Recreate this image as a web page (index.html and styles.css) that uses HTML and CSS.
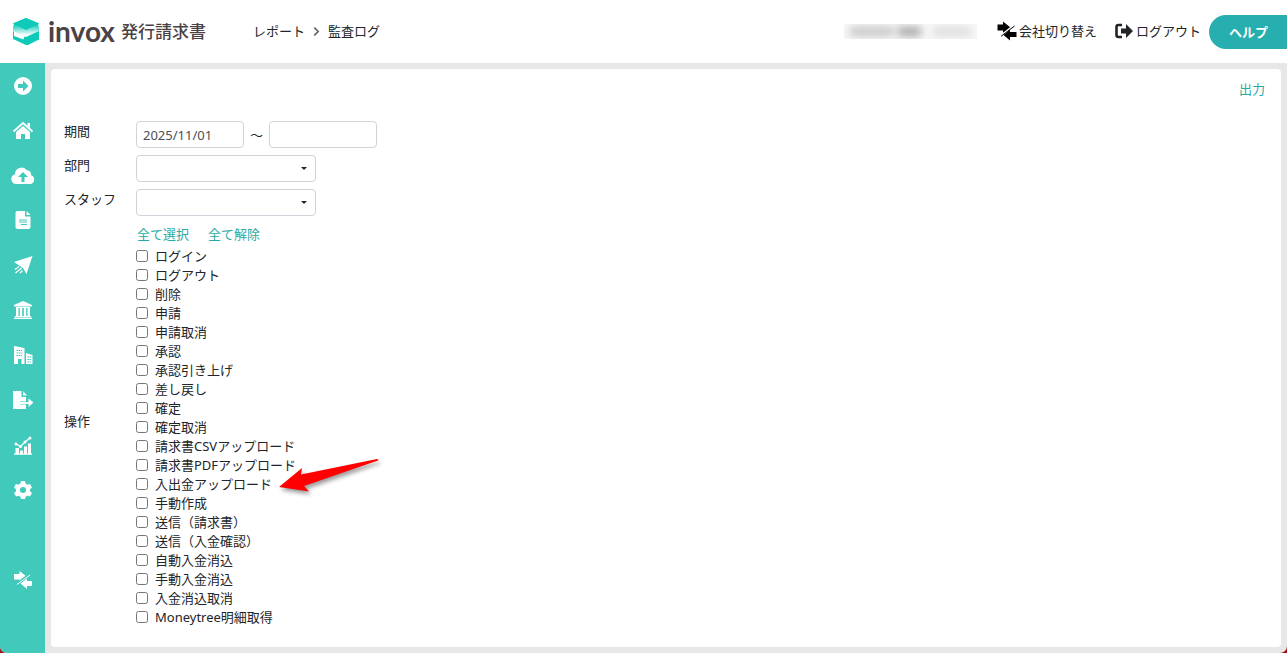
FILE: index.html
```html
<!DOCTYPE html>
<html lang="ja">
<head>
<meta charset="utf-8">
<meta name="viewport" content="width=device-width, initial-scale=1">
<title>invox 発行請求書 - 監査ログ</title>
<link rel="stylesheet" href="styles.css">
</head>
<body>
<div class="app">
  <header class="header">
    <a class="logo" href="#">
      <svg class="logo-mark" viewBox="0 0 28 28" aria-hidden="true">
        <defs><linearGradient id="fade" x1="0" y1="0" x2="0" y2="1"><stop offset="0.35" stop-color="#0fcab8"/><stop offset="0.9" stop-color="#0fcab8" stop-opacity="0"/></linearGradient></defs>
        <path d="M14 1l13 5.500-1 1.500 1 2v4l-13 6-13-6v-4l1-2-1-1.500z" fill="url(#fade)"/>
        <path d="M14 1l13 5.500L14 13 1 6.500z" fill="#0fcab8"/>
        <path d="M1 14l1 1v4l9.500 3.500 1-3 1.500.5 13-6v8.500L16 28h-2L1 22z" fill="#0fcab8"/>
      </svg>
      <span class="logo-name">invox</span>
      <span class="logo-sub">発行請求書</span>
    </a>
    <nav class="crumbs" aria-label="パンくず">
      <a href="#">レポート</a>
      <svg class="crumb-arrow" viewBox="0 0 6 8" aria-hidden="true"><path d="M1 0.500L4.500 4 1 7.500" fill="none" stroke="#666" stroke-width="1.500"/></svg>
      <span>監査ログ</span>
    </nav>
    <div class="account" aria-hidden="true"><i class="smear smear-a"></i><i class="smear smear-b"></i><i class="smear smear-c"></i></div>
    <a class="tool" href="#">
      <svg class="tool-icon" viewBox="0 0 20 20" aria-hidden="true"><path d="M0.500 3.500h5.500V0.500l7.500 6-1 1.500-5 4-1.500.5V9.500H0.500zM19.500 11v5h-6.500v3.500L6.500 14l1.500-1.500L13 8.500V11z"/><path d="M3.500 15L17.500 4" stroke="#fff" stroke-width="2.200"/><path d="M4 15.300L17.500 5" stroke="#000" stroke-width="1"/></svg>
      <span>会社切り替え</span>
    </a>
    <a class="tool tool-logout" href="#">
      <svg class="tool-icon" viewBox="0 0 20 20" aria-hidden="true"><path d="M8 4H4.500Q2.500 4 2.500 6v8q0 2 2 2H8" fill="none" stroke="#212529" stroke-width="2.600"/><path d="M7 7.500h5V3l7 7-7 7v-4.500H7z" fill="#212529"/></svg>
      <span>ログアウト</span>
    </a>
    <button class="help" type="button">ヘルプ</button>
  </header>
  <div class="body">
    <nav class="side" aria-label="メニュー">
      <a href="#" aria-label="開く"><svg viewBox="0 0 22 22"><path fill-rule="evenodd" d="M11 2a9 9 0 100 18 9 9 0 000-18zM6 9h5V5.500l5.500 5.500-5.500 5.500V13H6z"/></svg></a>
      <a href="#" aria-label="ホーム"><svg viewBox="0 0 22 22"><path d="M11 6l7 6V19h-5v-5H9v5H4v-7z"/><path d="M1.500 11.500L11 3l9.500 8.500" fill="none" stroke="#fff" stroke-width="1.800"/><path d="M15.500 3H18v5l-2.500-2z"/></svg></a>
      <a href="#" aria-label="アップロード"><svg class="wide" viewBox="0 0 24 22"><path fill-rule="evenodd" d="M5.500 19a5 5 0 01-1.500-9.800A6.500 6.500 0 0115.500 5a4.500 4.500 0 014.500 5.200A4.500 4.500 0 0119 19zM10.500 17h3v-5H17l-5-5-5 5h3.500z"/></svg></a>
      <a href="#" aria-label="請求書"><svg viewBox="0 0 22 22"><path d="M5.500 1H13v5.500h5.500V17q0 2-2 2h-11q-2 0-2-2V3q0-2 2-2zM14.500 1l4 4h-4z"/><path d="M7 10h8M7 12h8M9 14.500h6" stroke="#41c9bb" stroke-width="1"/></svg></a>
      <a href="#" aria-label="送信"><svg viewBox="0 0 22 22"><path d="M20.500 1L14.500 19l-3.500-6L2 7z"/><path d="M3 14.500l4-3M3.500 18l6-5M8 18l2.500-2.500" fill="none" stroke="#fff" stroke-width="1.300"/></svg></a>
      <a href="#" aria-label="銀行"><svg viewBox="0 0 22 22"><path d="M11 1l9 4v1.500H2V5zM4 7h14v1H4zM4 8h2.500v8H4zM7.800 8h2.400v8H7.800zM11.800 8h2.400v8h-2.400zM15.500 8H18v8h-2.500zM3 16h16v1H3zM2 17.500h18V19H2z"/></svg></a>
      <a href="#" aria-label="会社"><svg viewBox="0 0 22 22"><path d="M2 1l10.500 2v16H9.500v-5H6v5H2zM14 8l6.500 2v9H14z"/><path d="M4.500 5.500h6M4.500 8h6M4.500 10.500h6M15.500 12h3.500M15.500 14.500h3.500M15.500 17h3.500" stroke="#41c9bb" stroke-width="1" stroke-dasharray="1.500 .6"/></svg></a>
      <a href="#" aria-label="出力"><svg viewBox="0 0 22 22"><path d="M1 1h8.500v6H14v4.500H8v3h6V19H1zM11 1l4 4.500h-4zM8 12h8.500V8.500l5 4-5 4.500v-3H8z"/></svg></a>
      <a href="#" aria-label="レポート"><svg viewBox="0 0 22 22"><path d="M3.500 13H7v6H3.500zM8 15.500h3V19H8zM12 11.500h3V19h-3zM16 8.500h3V19h-3zM2 18.500h18v1.200H2z"/><path d="M4 9l4.500 2.500L13 7l5-4" fill="none" stroke="#fff" stroke-width="1.300"/><circle cx="4" cy="9" r="1.500"/><circle cx="8.500" cy="11.500" r="1.500"/><circle cx="13" cy="7" r="1.500"/><circle cx="18" cy="3" r="1.500"/></svg></a>
      <a href="#" aria-label="設定"><svg viewBox="0 1 22 22"><path fill-rule="evenodd" d="M9 2h4l.6 2.600 1.900 1.100 2.500-.8 2 3.500-2 1.800v2l2 1.800-2 3.500-2.500-.8-1.900 1.100L13 20H9l-.6-2.200-1.900-1.100-2.500.8-2-3.500 2-1.800v-2L2 8.400l2-3.500 2.500.8 1.900-1.100zM11 8a3 3 0 100 6 3 3 0 000-6z"/></svg></a>
      <a class="side-switch" href="#" aria-label="会社切り替え"><svg viewBox="0 0 22 22"><path d="M2 5h5.500V2l7 5.500-6.500 6h-.5V10.500H2zM20 12v5h-5v3l-6.500-5.500 6.500-5V12z"/><path d="M4 15.500L18 5" stroke="#41c9bb" stroke-width="2.200"/><path d="M5 15.500L18 6" stroke="#fff" stroke-width="1"/></svg></a>
    </nav>
    <main class="main">
      <section class="panel">
        <div class="panel-tools"><a class="link" href="#">出力</a></div>
        <form class="filters">
          <label for="from">期間</label>
          <div class="range">
            <input class="field date" id="from" type="text" value="2025/11/01">
            <span class="tilde">～</span>
            <input class="field date" type="text" aria-label="期間の終わり">
          </div>
          <label for="dept">部門</label>
          <div class="picker"><select class="field" id="dept"><option></option></select></div>
          <label for="staff">スタッフ</label>
          <div class="picker"><select class="field" id="staff"><option></option></select></div>
          <span class="ops-label" id="ops">操作</span>
          <div class="ops" role="group" aria-labelledby="ops">
            <div class="bulk"><a class="link" href="#">全て選択</a><a class="link" href="#">全て解除</a></div>
            <label class="check"><input type="checkbox">ログイン</label>
            <label class="check"><input type="checkbox">ログアウト</label>
            <label class="check"><input type="checkbox">削除</label>
            <label class="check"><input type="checkbox">申請</label>
            <label class="check"><input type="checkbox">申請取消</label>
            <label class="check"><input type="checkbox">承認</label>
            <label class="check"><input type="checkbox">承認引き上げ</label>
            <label class="check"><input type="checkbox">差し戻し</label>
            <label class="check"><input type="checkbox">確定</label>
            <label class="check"><input type="checkbox">確定取消</label>
            <label class="check"><input type="checkbox">請求書CSVアップロード</label>
            <label class="check"><input type="checkbox">請求書PDFアップロード</label>
            <div class="marked">
              <label class="check"><input type="checkbox">入出金アップロード</label>
              <svg class="pointer" viewBox="0 0 110 44" aria-hidden="true"><path d="M2 30L25 11l-1 6.500L100 2q2 0 1 1.500L27 29l5 5.500z" fill="#f00"/></svg>
            </div>
            <label class="check"><input type="checkbox">手動作成</label>
            <label class="check"><input type="checkbox">送信（請求書）</label>
            <label class="check"><input type="checkbox">送信（入金確認）</label>
            <label class="check"><input type="checkbox">自動入金消込</label>
            <label class="check"><input type="checkbox">手動入金消込</label>
            <label class="check"><input type="checkbox">入金消込取消</label>
            <label class="check"><input type="checkbox">Moneytree明細取得</label>
          </div>
        </form>
      </section>
    </main>
  </div>
</div>
</body>
</html>
```
FILE: styles.css
```css
* { box-sizing: border-box; }
html { background: #a01018; }
body {
  margin: 0;
  color: #212529;
  font: 13px/20px "Noto Sans", "Noto Sans CJK JP", sans-serif;
}
a { color: inherit; text-decoration: none; }
.app {
  display: flex;
  flex-direction: column;
  min-height: 100vh;
  overflow: hidden;
  background: #e7e7e7;
  border-radius: 0 0 7px 7px;
}

.header {
  display: flex;
  align-items: center;
  height: 63px;
  padding: 0 0 1px 12px;
  background: #fff;
  white-space: nowrap;
}
.logo { display: flex; align-items: center; color: #4a4244; }
.logo-mark { width: 28px; height: 28px; margin-right: 8px; }
.logo-name { font: 700 28px/28px Lato, sans-serif; }
.logo-sub { margin-left: 6px; font-size: 17px; font-weight: 500; font-family: "Noto Sans CJK JP", sans-serif; }
.crumbs { display: flex; align-items: center; gap: 8px; margin-left: 47px; }
.crumb-arrow { width: 7px; height: 9px; }
.account {
  display: flex;
  gap: 4px;
  width: 133px;
  height: 15px;
  margin-left: auto;
  padding: 3px 6px;
  overflow: hidden;
  background: #f8f8f8;
}
.smear { height: 9px; background: #c4c4c4; filter: blur(4px); }
.smear-a { width: 44px; }
.smear-b { width: 24px; background: #a4a4a4; }
.smear-c { width: 38px; margin-left: 8px; background: #dcdcdc; }
.tool { display: flex; align-items: center; gap: 2px; margin-left: 20px; }
.tool-logout { margin-left: 17px; }
.tool-icon { width: 20px; height: 20px; }
.help {
  height: 34px;
  margin: 1px 0 0 8px;
  padding: 0 19px 0 20px;
  border: 0;
  border-radius: 17px 0 0 17px;
  background: #27aeae;
  color: #fff;
  font: inherit;
  font-weight: 700;
}

.body { display: flex; flex: 1; }
.side {
  flex: none;
  width: 45px;
  background: #41c9bb;
}
.side a { display: grid; place-items: center; height: 45px; }
.side svg { width: 22px; height: 22px; fill: #fff; }
.side .wide { width: 24px; }
.side .side-switch { margin-top: 44px; }

.main { display: flex; flex: 1; padding: 6px; }
.panel { flex: 1; padding: 10px 16px 20px 13px; background: #fff; border-radius: 4px; }
.panel-tools { display: flex; justify-content: flex-end; }
.link { color: #27aba5; }
.filters {
  display: grid;
  grid-template-columns: 72px 1fr;
  row-gap: 7px;
  margin-top: 22px;
}
.range { display: flex; align-items: center; }
.tilde { width: 25px; text-align: center; }
.field {
  height: 27px;
  padding: 0 6px;
  border: 1px solid #ced4da;
  border-radius: 4px;
  background: #fff;
  color: #495057;
  font: inherit;
}
.date { width: 108px; }
.picker { position: relative; width: 180px; }
.picker select { display: block; width: 100%; appearance: none; }
.picker::after {
  content: "";
  position: absolute;
  top: 12px;
  right: 9px;
  border: 3px solid transparent;
  border-top-color: #212529;
  border-bottom: 0;
  pointer-events: none;
}
.ops-label { align-self: center; padding-bottom: 8px; }
.bulk { display: flex; gap: 19px; padding: 1px 0 2px 1px; }
.check { display: flex; align-items: center; width: max-content; height: 19px; }
.check input { width: 12px; height: 12px; margin: 0 7px 0 0; }
.marked { position: relative; }
.pointer {
  position: absolute;
  top: -17px;
  left: 141px;
  width: 110px;
  height: 44px;
  filter: drop-shadow(2px 3px 2px #0006);
}
```
